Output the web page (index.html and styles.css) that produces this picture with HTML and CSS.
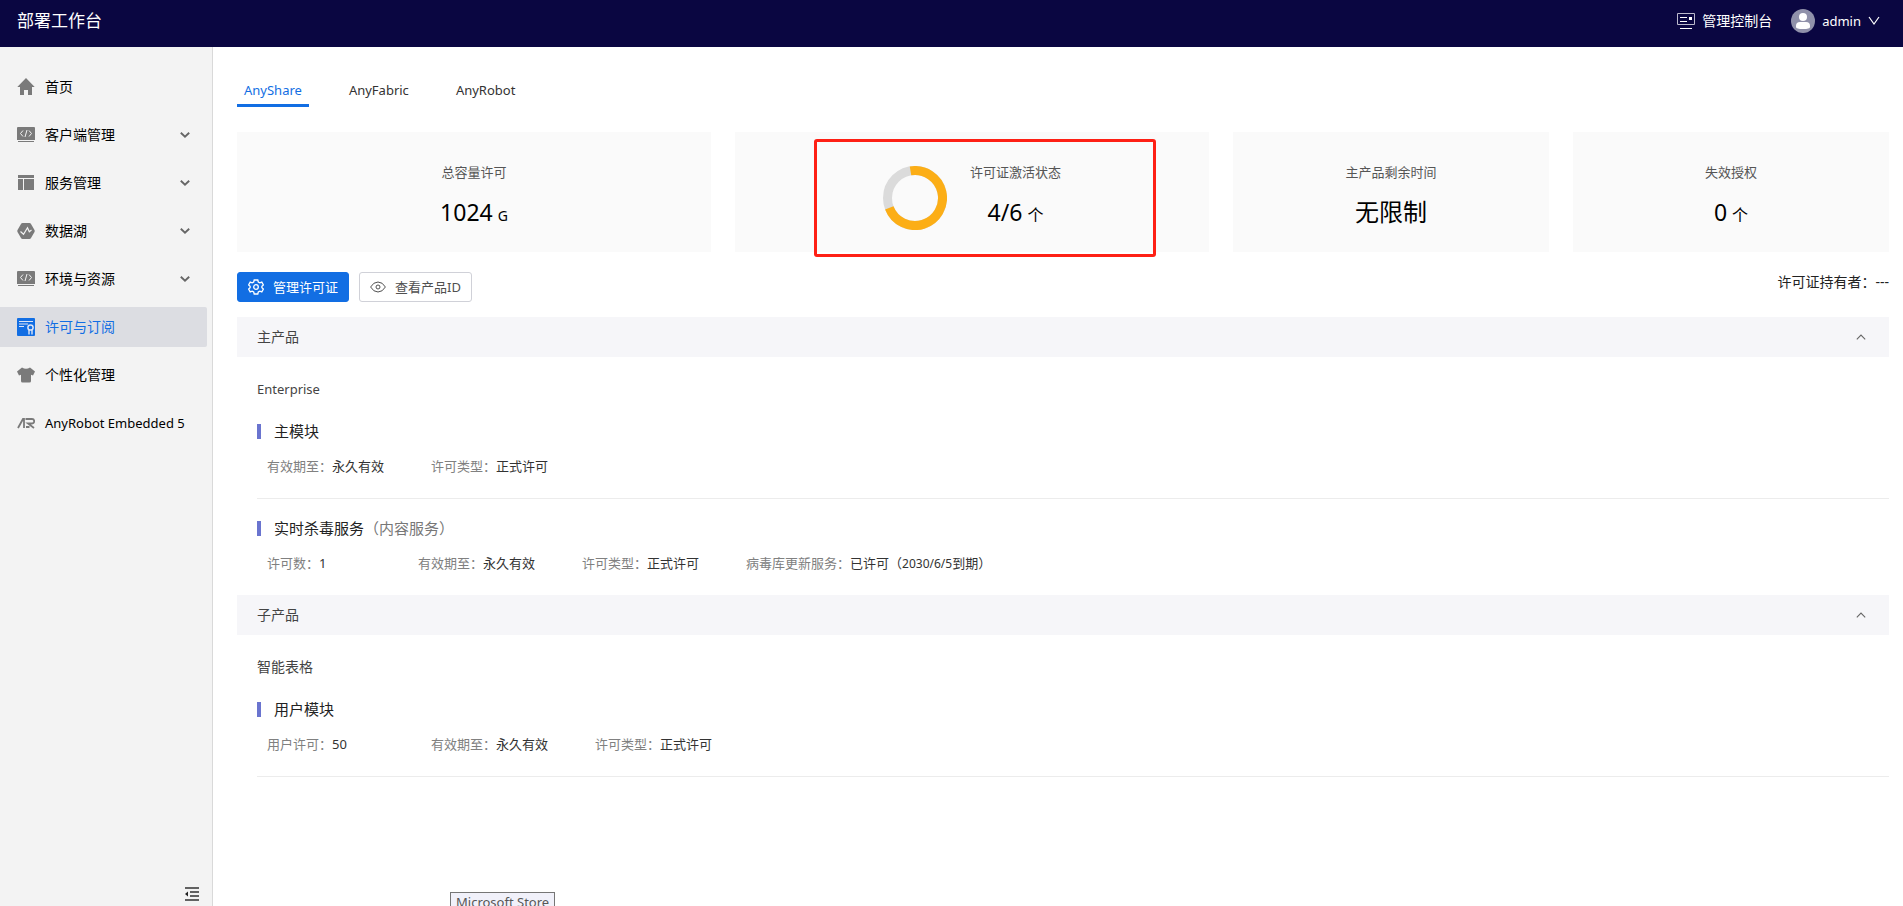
FILE: index.html
```
<!DOCTYPE html>
<html lang="zh-CN">
<head>
<meta charset="utf-8">
<title>部署工作台</title>
<link rel="stylesheet" href="styles.css">
</head>
<body>
<svg class="defs" aria-hidden="true">
  <symbol id="code" viewBox="0 0 18 18"><path fill="currentColor" d="M1 1h16a1 1 0 0 1 1 1v12H0V2a1 1 0 0 1 1-1zM1 15h16v1H1z"/><path d="M6 4.500 3.500 7.500 6 10.500M12 4.500l2.500 3-2.500 3M10 4 8 11" fill="none" stroke="#f3f3f3"/></symbol>
  <symbol id="down" viewBox="0 0 10 6"><path d="M.8.800 5 4.600 9.200.800" fill="none" stroke="currentColor" stroke-width="1.900"/></symbol>
  <symbol id="up" viewBox="0 0 10 6"><path d="m.8 5.300 4.200-4.300 4.200 4.300" fill="none" stroke="currentColor" stroke-width="1.100"/></symbol>
</svg>
<header class="topbar">
  <h1 class="brand">部署工作台</h1>
  <div class="account">
    <a class="console" href="#console">
      <svg class="icon" viewBox="0 0 18 18" fill="none" stroke="#fff"><path d="M.5 1.500h17v11H.5z" stroke="#bbb9cc"/><path d="M3 5.500h7M3 9.500h7M3 16.500h12"/><path d="M12 5h3v3h-3z" fill="#fff" stroke="none"/></svg>
      管理控制台</a>
    <button class="user" type="button">
      <svg class="avatar" viewBox="0 0 24 24"><circle cx="12" cy="12" r="12" fill="#9091aa"/><circle cx="12" cy="8" r="4" fill="#fff"/><path d="M5 17q0-4 4-4h6q4 0 4 4v1q0 2-7 2t-7-2z" fill="#fff"/></svg>
      <span class="latin">admin</span>
      <svg class="caret" viewBox="0 0 12 10"><path d="m1 1 5 7 5-7" fill="none" stroke="#fff" stroke-width="1.200"/></svg>
    </button>
  </div>
</header>
<div class="shell">
  <aside class="sidebar">
    <nav class="nav">
      <a class="nav-item" href="#home"><svg class="icon" viewBox="0 0 18 18"><path fill="currentColor" d="M9 0 .3 9H3v8h4v-5h4v5h4V9h2.700z"/></svg>首页</a>
      <button class="nav-item" type="button"><svg class="icon"><use href="#code"/></svg>客户端管理<svg class="arrow"><use href="#down"/></svg></button>
      <button class="nav-item" type="button"><svg class="icon" viewBox="0 0 18 18"><path fill="currentColor" d="M1 1h16v3H1zM1 5h5v11H1zM7 5h10v11H7z"/></svg>服务管理<svg class="arrow"><use href="#down"/></svg></button>
      <button class="nav-item" type="button"><svg class="icon" viewBox="0 0 18 18"><path fill="currentColor" d="M5.500 1h7q1 0 1.500 1l3.500 6q.5 1 0 2L14 16q-.5 1-1.500 1h-7Q4.500 17 4 16L.5 10q-.5-1 0-2L4 2q.5-1 1.500-1z"/><path d="m3.500 9.500 3 2.700 4-6.500 1.800 4 2.200-1.700" fill="none" stroke="#f3f3f3" stroke-width="1.200"/></svg>数据湖<svg class="arrow"><use href="#down"/></svg></button>
      <button class="nav-item" type="button"><svg class="icon"><use href="#code"/></svg>环境与资源<svg class="arrow"><use href="#down"/></svg></button>
      <a class="nav-item active" href="#license" aria-current="page"><svg class="icon" viewBox="0 0 18 18"><rect width="18" height="18" rx="1" fill="currentColor"/><path d="M2 3.500h14M2 6h9M2 8.500h5" stroke="#dce4f5"/><circle cx="13.500" cy="9.500" r="2.600" fill="none" stroke="#dce4f5" stroke-width="1.500"/><path d="M12 12v4.500M15 12v4.500" stroke="#dce4f5" stroke-width="1.400"/></svg>许可与订阅</a>
      <a class="nav-item" href="#personal"><svg class="icon" viewBox="0 0 18 18"><path fill="currentColor" d="M5 1.500q4 2.500 8 0L18 5.500l-2 4-2-.7V15q0 1.500-1.500 1.500h-7Q4 16.500 4 15V8.800l-2 .7-2-4z"/></svg>个性化管理</a>
      <a class="nav-item latin" href="#anyrobot"><svg class="icon" viewBox="0 0 18 18"><path d="M1 14 6 5h1v9M8.500 5H15q2.200 0 2.200 2.200T15 9.500h-4l6 4.500" fill="none" stroke="currentColor" stroke-width="1.800"/><path d="M9 12h3.500v2H9z" fill="currentColor"/></svg>AnyRobot Embedded 5</a>
    </nav>
    <button class="collapse" type="button" aria-label="收起菜单"><svg viewBox="0 0 14 14"><path d="M0 1h14M5 5h9M5 9h9M0 13h14" stroke="#333" stroke-width="1.300"/><path d="M0 7l3-2.500v5z" fill="#222"/></svg></button>
  </aside>
  <main class="content">
    <div class="tabs" role="tablist">
      <button class="tab latin selected" role="tab" aria-selected="true" type="button">AnyShare</button>
      <button class="tab latin" role="tab" aria-selected="false" type="button">AnyFabric</button>
      <button class="tab latin" role="tab" aria-selected="false" type="button">AnyRobot</button>
    </div>
    <section class="cards">
      <div class="card"><div class="stat"><div class="label">总容量许可</div><div class="figure"><span>1024</span><small class="gb">G</small></div></div></div>
      <div class="card">
        <svg class="donut" viewBox="0 0 64 64" fill="none" stroke-width="9"><circle cx="32" cy="32" r="27.500" stroke="#dbdbdb"/><path d="M27.500 4.900A27.500 27.500 0 1 1 6.300 41.800" stroke="#fcae16"/></svg>
        <div class="stat"><div class="label">许可证激活状态</div><div class="figure"><span>4/6</span><small>个</small></div></div>
        <div class="highlight"></div>
      </div>
      <div class="card"><div class="stat"><div class="label">主产品剩余时间</div><div class="figure words">无限制</div></div></div>
      <div class="card"><div class="stat"><div class="label">失效授权</div><div class="figure"><span>0</span><small>个</small></div></div></div>
    </section>
    <div class="toolbar">
      <button class="btn primary" type="button"><svg viewBox="0 0 16 16" fill="none" stroke="currentColor" stroke-width="1.300"><path d="M6.200 1h3.600l.5 2 1.500.8 2-.7 1.600 2.900-1.500 1.300v1.400l1.500 1.300-1.600 2.900-2-.7-1.500.8-.5 2H6.200l-.5-2-1.500-.8-2 .7L.6 10l1.500-1.300V7.300L.6 6l1.600-2.900 2 .7L5.700 3z"/><circle cx="8" cy="8" r="2.300"/></svg>管理许可证</button>
      <button class="btn" type="button"><svg viewBox="0 0 16 16" fill="none" stroke="currentColor"><path d="M.6 8Q3.500 3 8 3t7.400 5Q12.500 13 8 13T.6 8z"/><circle cx="8" cy="8" r="2"/></svg>查看产品ID</button>
      <div class="holder">许可证持有者：---</div>
    </div>
    <section class="product">
      <button class="band" type="button" aria-expanded="true">主产品<svg class="arrow"><use href="#up"/></svg></button>
      <div class="details">
        <div class="edition latin">Enterprise</div>
        <article class="module">
          <h2 class="title">主模块</h2>
          <dl class="facts">
            <div><dt>有效期至：</dt><dd>永久有效</dd></div>
            <div><dt>许可类型：</dt><dd>正式许可</dd></div>
          </dl>
        </article>
        <article class="module">
          <h2 class="title">实时杀毒服务<span>（内容服务）</span></h2>
          <dl class="facts">
            <div><dt>许可数：</dt><dd>1</dd></div>
            <div><dt>有效期至：</dt><dd>永久有效</dd></div>
            <div><dt>许可类型：</dt><dd>正式许可</dd></div>
            <div><dt>病毒库更新服务：</dt><dd>已许可（<span class="date">2030/6/5</span>到期）</dd></div>
          </dl>
        </article>
      </div>
    </section>
    <section class="product ruled">
      <button class="band" type="button" aria-expanded="true">子产品<svg class="arrow"><use href="#up"/></svg></button>
      <div class="details">
        <div class="edition">智能表格</div>
        <article class="module">
          <h2 class="title">用户模块</h2>
          <dl class="facts">
            <div><dt>用户许可：</dt><dd>50</dd></div>
            <div><dt>有效期至：</dt><dd>永久有效</dd></div>
            <div><dt>许可类型：</dt><dd>正式许可</dd></div>
          </dl>
        </article>
      </div>
    </section>
  </main>
</div>
<div class="tooltip" role="tooltip">Microsoft Store</div>
</body>
</html>
```
FILE: styles.css
```
* { box-sizing: border-box; }
html, body { height: 100%; }
body {
  margin: 0;
  display: flex;
  flex-direction: column;
  overflow: hidden;
  background: #fff;
  color: #000;
  font: 14px/22px "Noto Sans", "Noto Sans CJK SC", sans-serif;
}
button { border: 0; padding: 0; background: none; color: inherit; font: inherit; cursor: pointer; }
a { color: inherit; text-decoration: none; }
svg { display: block; flex: none; }
h1, h2, dl, dd { margin: 0; font-weight: 400; }
.defs { position: absolute; width: 0; height: 0; }
.latin { font-size: 13px; }

.topbar {
  display: flex;
  justify-content: space-between;
  align-items: center;
  flex: none;
  height: 47px;
  padding: 0 23px 5px 17px;
  background: #0a0641;
  color: #fff;
}
.brand { font-size: 17px; }
.account, .console, .user { display: flex; align-items: center; }
.account { gap: 19px; }
.console { gap: 7px; }
.user { gap: 7px; }
.avatar { width: 24px; height: 24px; }
.caret { width: 12px; height: 10px; }
.icon { width: 18px; height: 18px; }

.shell { display: flex; flex: 1; min-height: 0; }
.sidebar {
  display: flex;
  flex-direction: column;
  justify-content: space-between;
  flex: none;
  width: 213px;
  padding: 20px 5px 5px 0;
  border-right: 1px solid #d9d9d9;
  background: #f3f3f3;
}
.nav { display: flex; flex-direction: column; gap: 8px; }
.nav-item {
  display: flex;
  align-items: center;
  gap: 10px;
  height: 40px;
  padding: 0 17px;
  border-radius: 0 2px 2px 0;
}
.nav-item .icon { color: #7a7a7a; }
.arrow { width: 10px; height: 6px; margin-left: auto; color: #666; }
.nav-item.active { background: #dcdde2; color: #126ee3; }
.nav-item.active .icon { color: #126ee3; }
.collapse { align-self: flex-end; margin-right: 8px; }
.collapse svg { width: 14px; height: 14px; }

.content { flex: 1; min-width: 0; padding: 32px 14px 0 24px; }
.tabs { display: flex; gap: 33px; }
.tab { padding: 0 7px 3px; border-bottom: 3px solid transparent; color: #333; }
.tab.selected { border-color: #126ee3; color: #126ee3; }

.cards { display: grid; grid-template-columns: 3fr 3fr 2fr 2fr; gap: 24px; }
.tabs + .cards { margin-top: 25px; }
.card {
  position: relative;
  display: flex;
  justify-content: center;
  gap: 23px;
  height: 120px;
  padding-top: 29px;
  background: #fafafa;
}
.stat { text-align: center; }
.label { color: #555; font-size: 13px; }
.figure {
  display: flex;
  justify-content: center;
  align-items: baseline;
  gap: 5px;
  margin-top: 13px;
  font-size: 23px;
  line-height: 32px;
}
.figure.words { font-size: 24px; }
.figure small { font-size: 16px; }
.figure small.gb { font-size: 14px; }
.donut { width: 64px; height: 64px; margin-top: 5px; }
.highlight {
  position: absolute;
  top: 7px;
  right: 53px;
  bottom: -5px;
  left: 79px;
  border: 3px solid #fe2015;
  border-radius: 3px;
}

.toolbar { display: flex; align-items: flex-start; gap: 10px; padding: 20px 0 15px; }
.btn {
  display: flex;
  align-items: center;
  gap: 9px;
  height: 30px;
  padding: 0 10px;
  border: 1px solid #d0d1d8;
  border-radius: 3px;
  color: #505050;
  font-size: 13px;
}
.btn svg { width: 16px; height: 16px; }
.btn.primary { border-color: #126ee3; background: #126ee3; color: #fff; }
.holder { margin-left: auto; color: #222; line-height: 20px; }

.band {
  display: flex;
  align-items: center;
  width: 100%;
  height: 40px;
  padding: 0 23px 0 20px;
  background: #f6f6f9;
  color: #444;
}
.details { padding-left: 20px; }
.edition { padding: 21px 0 2px; color: #444; }
.module { padding: 17px 0 21px; border-bottom: 1px solid #ececec; }
.product:not(.ruled) .module:last-child { padding-bottom: 20px; border-bottom: 0; }
.title { display: flex; align-items: center; font-size: 15px; line-height: 24px; color: #222; }
.title::before { content: ""; width: 4px; height: 15px; margin-right: 13px; background: #6a74cf; }
.title span { color: #777; }
.facts { display: flex; margin-top: 12px; padding-left: 10px; font-size: 13px; }
.facts div { display: flex; }
.facts dt { color: #808080; }
.facts dd { min-width: 99px; color: #333; }
.date { font-size: 12px; }

.tooltip {
  position: fixed;
  bottom: -6px;
  left: 450px;
  padding: 0 5px;
  border: 1px solid #767676;
  background: #f1f1fa;
  color: #575757;
  font-size: 13px;
  line-height: 18px;
}
```
